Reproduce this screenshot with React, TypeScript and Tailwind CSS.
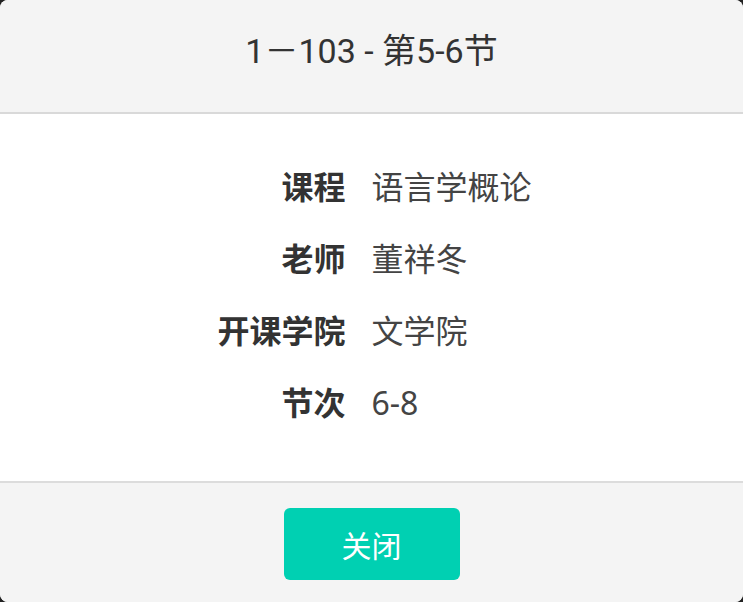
import React from 'react'

const rows = [
  { label: '课程', value: '语言学概论' },
  { label: '老师', value: '董祥冬' },
  { label: '开课学院', value: '文学院' },
  { label: '节次', value: '6-8' },
]

export default function App() {
  return (
    <div className="w-[743px] h-[602px] bg-[#222]">
      <div className="w-full h-full flex flex-col bg-white rounded-[8px] overflow-hidden">
        <div className="h-[114px] shrink-0 bg-[#f4f4f4] border-b-2 border-[#d9d9d9] flex items-center justify-center">
          <h1
            className="text-[34px] text-[#333] pb-[10px]"
            style={{ fontFamily: 'Roboto, "Noto Sans CJK SC", sans-serif' }}
          >
            1－103 - 第5-6节
          </h1>
        </div>

        <div
          className="flex-1 pt-[50px] grid grid-cols-2 content-start gap-y-[27px]"
          style={{ fontFamily: '"Noto Sans", "Noto Sans CJK SC", sans-serif' }}
        >
          {rows.map((r) => (
            <React.Fragment key={r.label}>
              <div className="text-right pr-[26px] text-[32px] leading-[45px] font-bold text-[#333]">
                {r.label}
              </div>
              <div className="text-[32px] leading-[45px] text-[#444]">{r.value}</div>
            </React.Fragment>
          ))}
        </div>

        <div className="h-[121px] shrink-0 bg-[#f4f4f4] border-t-2 border-[#dcdcdc] flex items-start justify-center pt-[25px]">
          <button
            className="w-[176px] h-[72px] rounded-[6px] bg-[#00d0b2] text-white text-[30px]"
            style={{ fontFamily: '"Noto Sans CJK SC", sans-serif' }}
          >
            关闭
          </button>
        </div>
      </div>
    </div>
  )
}
